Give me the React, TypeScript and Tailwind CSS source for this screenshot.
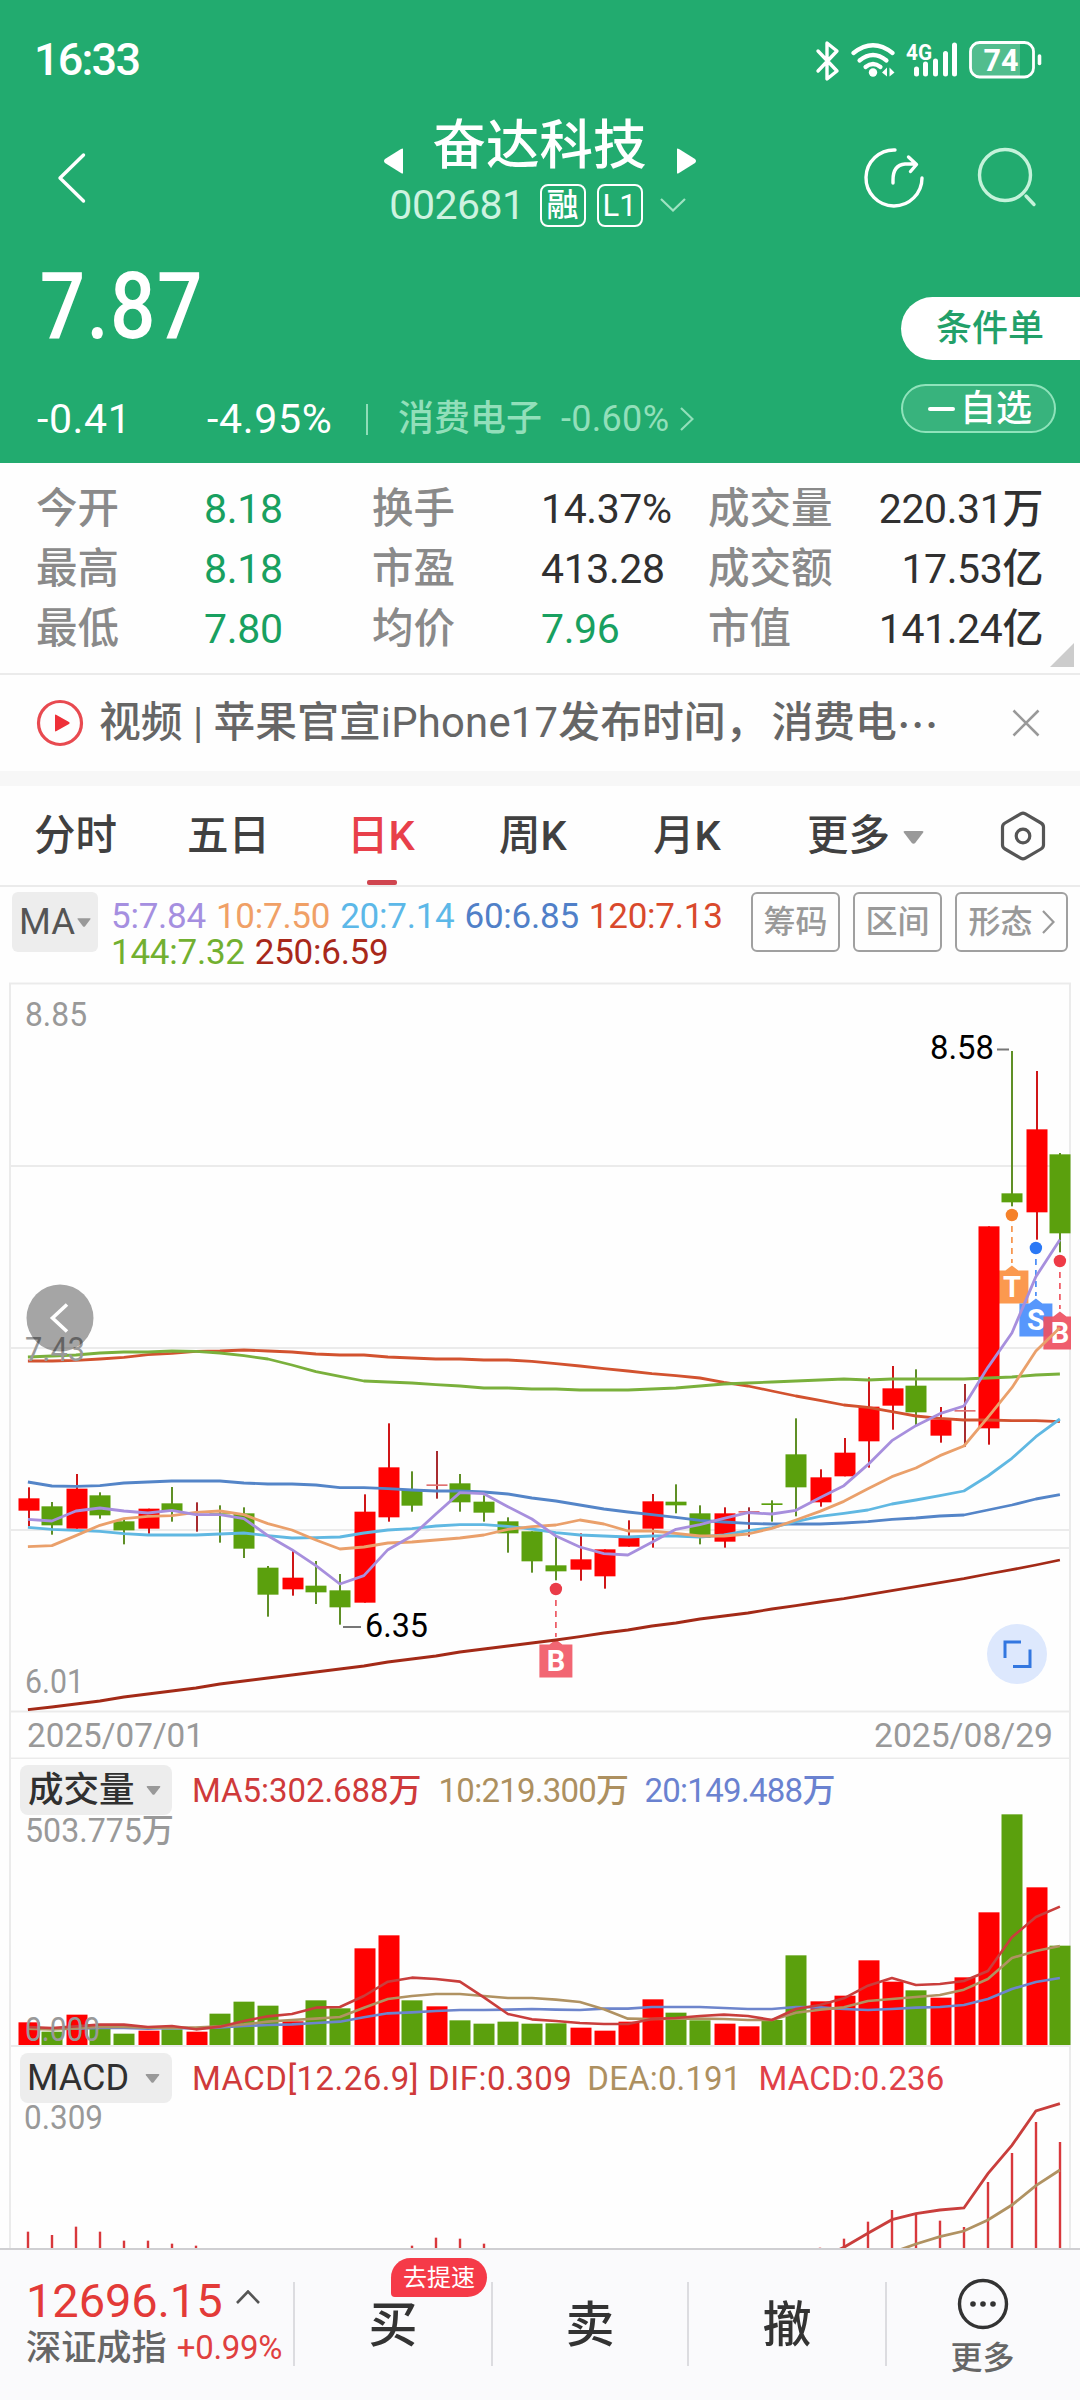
import React from "react";

const FONT = "font-[Roboto,'Noto_Sans_CJK_SC',sans-serif]";

const RED = "#ff0000";
const GREEN = "#5ba00d";
const xAt = (i: number) => 27.9 + i * 24;
// Rising candles sit one pixel to the right of falling ones
const barX = (i: number) => (candles[i][0] === "g" ? 28 : 29) + i * 24;

// Candle: direction, body top, body bottom, high, low (thirds of a pixel below y=1340)
type Candle = [string, number, number, number, number];
const candles: Candle[] = [
  ["r", 475, 512, 442, 558], ["g", 499, 556, 486, 584], ["r", 446, 566, 402, 566], ["g", 466, 526, 457, 536],
  ["g", 544, 571, 536, 613], ["r", 506, 566, 506, 581], ["g", 490, 515, 441, 545], ["d", 516, 519, 487, 575],
  ["g", 520, 523, 496, 608], ["g", 520, 626, 502, 654], ["g", 683, 764, 678, 830], ["r", 713, 748, 632, 767],
  ["g", 737, 757, 663, 792], ["g", 751, 802, 702, 854], ["r", 515, 788, 463, 788], ["r", 382, 532, 250, 545],
  ["g", 447, 497, 394, 515], ["d", 433, 438, 333, 476], ["g", 430, 487, 402, 515], ["g", 485, 518, 466, 545],
  ["g", 544, 580, 532, 638], ["g", 574, 664, 574, 698], ["g", 676, 694, 590, 721], ["r", 658, 689, 580, 722],
  ["r", 628, 709, 628, 746], ["r", 593, 620, 541, 620], ["r", 484, 566, 462, 623], ["g", 485, 496, 433, 520],
  ["g", 520, 594, 496, 613], ["r", 520, 605, 502, 623], ["d", 513, 518, 502, 590], ["g", 490, 495, 481, 545],
  ["g", 343, 442, 235, 529], ["r", 412, 487, 388, 500], ["r", 338, 409, 294, 409], ["r", 200, 304, 112, 383],
  ["r", 145, 197, 78, 269], ["g", 137, 217, 88, 256], ["r", 238, 287, 201, 308], ["d", 210, 215, 132, 320],
  ["r", -341, 265, -341, 314], ["g", -440, -413, -867, -401], ["r", -632, -383, -807, -301], ["g", -557, -320, -561, -263],
];

const averages: { color: string; v: number[] }[] = [
  { color: "#a32a17", v: [1109, 1101, 1092, 1083, 1071, 1062, 1053, 1044, 1032, 1023, 1014, 1005, 996, 987, 978, 966, 957, 948, 936, 927, 918, 909, 900, 890, 879, 870, 858, 849, 837, 828, 819, 807, 797, 786, 776, 764, 752, 740, 728, 716, 702, 689, 675, 660] },
  { color: "#d2522f", v: [63, 63, 61, 57, 52, 44, 40, 34, 33, 30, 33, 36, 42, 45, 45, 51, 54, 57, 57, 60, 60, 64, 71, 78, 86, 93, 101, 107, 114, 127, 138, 153, 168, 181, 195, 202, 215, 228, 235, 240, 240, 242, 242, 245] },
  { color: "#7ab03c", v: [51, 48, 45, 39, 36, 36, 33, 34, 39, 47, 57, 75, 95, 109, 123, 126, 129, 134, 138, 144, 144, 147, 147, 150, 150, 150, 147, 144, 138, 132, 129, 126, 123, 120, 117, 120, 117, 117, 117, 117, 114, 111, 105, 102] },
  { color: "#5485c8", v: [426, 438, 439, 437, 429, 426, 423, 423, 423, 429, 432, 432, 435, 443, 443, 446, 450, 453, 453, 456, 462, 474, 483, 495, 507, 516, 524, 532, 541, 546, 550, 552, 552, 552, 549, 545, 538, 534, 528, 525, 510, 495, 477, 464] },
  { color: "#60b8e2", v: [562, 568, 571, 574, 581, 585, 585, 585, 582, 579, 587, 594, 593, 591, 579, 570, 566, 558, 554, 554, 559, 567, 578, 585, 588, 591, 588, 588, 591, 585, 572, 563, 545, 529, 520, 510, 492, 480, 467, 453, 408, 355, 290, 237] },
  { color: "#eaa06b", v: [620, 617, 587, 556, 536, 529, 527, 517, 513, 524, 551, 570, 600, 627, 621, 609, 606, 600, 594, 585, 568, 560, 555, 540, 552, 573, 573, 580, 588, 588, 582, 565, 540, 514, 484, 446, 410, 384, 347, 318, 232, 143, 33, -37] },
  { color: "#a78fdd", v: [538, 543, 513, 504, 513, 519, 511, 524, 524, 536, 587, 629, 677, 732, 707, 629, 588, 522, 458, 461, 500, 537, 588, 621, 641, 645, 607, 568, 554, 535, 518, 522, 511, 473, 437, 374, 302, 257, 221, 198, 82, -21, -190, -301] },
];

// Volume bar tops and averages (thirds of a pixel below y=1750)
const volume = [817, 845, 794, 836, 851, 842, 838, 845, 791, 755, 767, 814, 751, 775, 595, 556, 751, 769, 811, 821, 815, 821, 820, 833, 842, 815, 748, 788, 811, 821, 829, 810, 616, 754, 737, 631, 695, 721, 743, 682, 487, 193, 412, 587];
const volumeAverages: { color: string; v: number[] }[] = [
  { color: "#6d85cc", v: [835, 836, 836, 834, 834, 836, 834, 835, 832, 828, 825, 823, 819, 815, 802, 790, 787, 783, 780, 780, 779, 777, 779, 780, 776, 776, 771, 771, 771, 774, 777, 777, 771, 772, 777, 780, 777, 773, 771, 765, 747, 717, 696, 684] },
  { color: "#b09262", v: [836, 838, 835, 830, 831, 833, 833, 833, 829, 823, 815, 810, 806, 801, 773, 747, 738, 732, 732, 738, 744, 744, 749, 756, 778, 806, 807, 806, 806, 807, 810, 810, 788, 779, 772, 753, 747, 741, 735, 719, 687, 624, 603, 588] },
  { color: "#c93e3c", v: [831, 834, 829, 824, 824, 831, 828, 838, 830, 813, 799, 792, 773, 771, 738, 695, 683, 687, 695, 742, 792, 808, 813, 819, 822, 822, 807, 804, 798, 794, 798, 810, 777, 765, 745, 707, 684, 705, 702, 693, 663, 562, 501, 470] },
];

// MACD bars and lines: index, value (thirds of a pixel below y=2040)
const macdBars: [number, number][] = [[0, 575], [1, 585], [2, 560], [3, 575], [4, 602], [5, 602], [6, 611], [7, 617], [16, 617], [17, 593], [18, 596], [19, 611], [33, 623], [34, 596], [35, 545], [36, 510], [37, 520], [38, 542], [39, 561], [40, 426], [41, 339], [42, 246], [43, 306]];
const dif: [number, number][] = [[33, 655], [34, 622], [35, 580], [36, 539], [37, 521], [38, 510], [39, 504], [40, 401], [41, 316], [42, 213], [43, 191]];
const dea: [number, number][] = [[36, 638], [37, 612], [38, 590], [39, 573], [40, 540], [41, 495], [42, 437], [43, 390]];

const toPoints = (v: [number, number][], base: number) => v.map(([i, y]) => `${xAt(i)},${base + y / 3}`).join(" ");
const series = (v: number[], base: number) => toPoints(v.map((y, i) => [i, y] as [number, number]), base);

function Caret({ className }: { className: string }) {
  return (
    <svg viewBox="0 0 16 10" className={className} fill="#999">
      <path d="M1.5 0h13q1.800 0 .8 1.400L9.300 9.200q-1.300 1.200-2.600 0L.7 1.400Q-.3 0 1.500 0Z" />
    </svg>
  );
}

function Label({ x, y, w, size = 33, fill = "#999", children }: { x: number; y: number; w: number; size?: number; fill?: string; children: string }) {
  return (
    <text x={x} y={y} fontSize={size} fill={fill} fontWeight={450} textLength={w} lengthAdjust="spacingAndGlyphs">
      {children}
    </text>
  );
}

function Marker({ i, y, letter, dot, tag }: { i: number; y: number; letter: string; dot: string; tag: string }) {
  const x = xAt(i);
  return (
    <g>
      <circle cx={x} cy={y} r={6.2} fill={dot} />
      <path d={`M${x} ${y + 11}v37`} stroke={dot} strokeWidth={1.7} strokeDasharray="6 5" opacity={0.85} />
      <path d={`M${x - 16.5} ${y + 55.5}h10l6.5 -5l6.5 5h10v33h-33z`} fill={tag} fillOpacity={0.93} />
      <text x={x} y={y + 82} fontSize={29} fontWeight={700} fill="#fff" textAnchor="middle">
        {letter}
      </text>
    </g>
  );
}

function StatusBar() {
  return (
    <div className="flex h-[116px] items-center justify-between pl-[34px] pr-[36px] pt-[3px]">
      <span className="text-[45px] font-medium leading-[45px] tracking-[-1.8px]">16:33</span>
      <svg viewBox="814 36 230 44" className="h-[44px] w-[230px]" fill="none" stroke="#fff">
        <path d="M818 49l19 20-10 8V41l10 8-19 20" strokeWidth="3.400" strokeLinejoin="round" strokeLinecap="round" />
        <g strokeWidth="4.200" strokeLinecap="round">
          <path d="M853.500 51q19.500-15.500 39 0" />
          <path d="M859.500 58.500q13.500-11 27 0" />
          <path d="M865.500 65q7.500-6 15 0" />
        </g>
        <circle cx="873" cy="70.500" r="4.200" fill="#fff" stroke="none" />
        <path d="M887 65.500v9l-5-4zM889.500 65.500v9l5-4z" fill="#fff" stroke="none" />
        <text x="906" y="57.500" fontSize="22" fontWeight="700" fill="#fff" stroke="none" textLength="26" lengthAdjust="spacingAndGlyphs">4G</text>
        <path d="M916.500 67v5M925.500 62v10M935.500 59v13M945.500 51.500v20.500M954.500 43v29" strokeWidth="5" strokeLinecap="round" />
        <path d="M978 41h42v34h-42q-8 0-8-8V49q0-8 8-8z" fill="#fff" fillOpacity=".22" stroke="none" />
        <rect x="970.500" y="40.500" width="63" height="34.500" rx="9" strokeWidth="2.800" />
        <path d="M1039.500 54v7.500" strokeWidth="3.600" strokeLinecap="round" />
        <text x="983.500" y="69" fontSize="32" fontWeight="700" fill="#fff" stroke="none" textLength="35" lengthAdjust="spacingAndGlyphs">74</text>
      </svg>
    </div>
  );
}

function Header() {
  return (
    <header className="h-[463px] bg-[#22ab6f] text-white">
      <StatusBar />
      <div className="flex h-[124px] justify-between pl-[56px] pr-[42px]">
        <svg viewBox="56 150 32 56" className="mt-[34px] h-[56px] w-[32px]" fill="none" stroke="#fff" strokeWidth="3.400" strokeLinecap="round" strokeLinejoin="round">
          <path d="M83.500 155L60 178l23.500 23" />
        </svg>
        <div className="ml-[131px] flex w-[320px] flex-col items-center">
          <div className="flex h-[60px] items-center gap-[30px]">
            <svg viewBox="0 0 19 26" className="mt-[29px] h-[26px] w-[19px]" fill="#fff"><path d="M19 1v24q0 1-2 0L1 15q-2-2 0-4L17 1q2-1 2 0z" /></svg>
            <h1 className="text-[53.5px] font-medium leading-[60px]">奋达科技</h1>
            <svg viewBox="0 0 19 26" className="mt-[29px] h-[26px] w-[19px]" fill="#fff"><path d="M0 1v24q0 1 2 0L18 15q2-2 0-4L2 1Q0 0 0 1z" /></svg>
          </div>
          <div className="mt-[8px] flex h-[42px] items-center pr-[4px]">
            <span className="text-[41px] leading-[42px] tracking-[-0.5px] text-[#cdf3e0]">002681</span>
            <span className="ml-[15px] flex h-[43px] w-[46px] items-center justify-center rounded-[8px] border-2 border-white text-[32px] font-medium leading-none">融</span>
            <span className="ml-[11px] flex h-[43px] w-[46px] items-center justify-center rounded-[8px] border-2 border-white text-[31px] font-[450] leading-none">L1</span>
            <svg viewBox="0 0 26 14" className="ml-[17px] h-[14px] w-[26px]" fill="none" stroke="#9fe3c2" strokeWidth="2.200"><path d="M1 1l12 11.500L25 1" /></svg>
          </div>
        </div>
        <svg viewBox="860 144 178 68" className="mt-[28px] h-[68px] w-[178px]" fill="none" stroke="#fff" strokeWidth="3.400" strokeLinecap="round">
          <path d="M895 150A28 28 0 1 0 922 178" />
          <path d="M893 183v-3q0-15 12-16h11M908.500 157l8 7.500-6 7" strokeLinejoin="round" />
          <g stroke="#c4f2da">
            <circle cx="1005" cy="175" r="25.500" />
            <path d="M1026 196l8 8.500" />
          </g>
        </svg>
      </div>
      <div className="flex h-[223px] justify-between">
        <div className="pl-[38px]">
          <div className="mt-[21px] flex h-[92px] items-center">
            <span className="origin-left scale-x-[0.87] pl-[2px] text-[92px] font-medium leading-[92px] tracking-[1.5px]">7.87</span>
          </div>
          <div className="mt-[41px] flex h-[50px] items-center leading-[50px]">
            <span className="ml-[-1px] w-[170px] text-[41px] font-[450] tracking-[0.6px]">-0.41</span>
            <span className="w-[159px] text-[41px] font-[450] tracking-[0.7px]">-4.95%</span>
            <span className="h-[31px] w-[2px] bg-[#8fddb8]" />
            <span className="ml-[30px] text-[36px] font-medium text-[#92dfba]">消费电子</span>
            <span className="ml-[19px] text-[36px] tracking-[0.3px] text-[#92dfba]">-0.60%</span>
            <svg viewBox="0 0 14 24" className="ml-[11px] h-[24px] w-[14px]" fill="none" stroke="#92dfba" strokeWidth="2.200"><path d="M1 1l11.500 11L1 23" /></svg>
          </div>
        </div>
        <div className="flex w-[179px] flex-col">
          <button className="mt-[57px] flex h-[63px] items-center rounded-l-full bg-white pl-[35px] text-[36px] font-medium leading-none text-[#22a069]">条件单</button>
          <button className="mt-[24px] flex h-[49px] w-[155px] items-center rounded-full border-2 border-[#8fe3bb] bg-white/10 pl-[25px] text-[36px] font-medium leading-none">
            <span className="mr-[5px] h-[4px] w-[27px] rounded-full bg-white" />自选
          </button>
        </div>
      </div>
    </header>
  );
}

const stats = [
  ["今开", "8.18", "换手", "14.37%", "成交量", "220.31万"],
  ["最高", "8.18", "市盈", "413.28", "成交额", "17.53亿"],
  ["最低", "7.80", "均价", "7.96", "市值", "141.24亿"],
];

function Stats() {
  return (
    <section className="relative flex h-[212px] flex-col border-b-2 border-[#ebebeb] pl-[36px] pr-[37px] pt-[16px]">
      {stats.map((row, i) => (
        <div key={row[0]} className="flex h-[60px] items-center text-[41px] font-[450] leading-[60px]">
          <span className="w-[168px] text-[41.5px] text-[#8a8a8a]">{row[0]}</span>
          <span className="w-[168px] tracking-[-0.3px] text-[#18a060]">{row[1]}</span>
          <span className="w-[169px] text-[41.5px] text-[#8a8a8a]">{row[2]}</span>
          <span className={i === 2 ? "w-[167px] tracking-[-0.4px] text-[#18a060]" : "w-[167px] tracking-[-0.4px] text-[#303030]"}>{row[3]}</span>
          <span className="text-[41.5px] text-[#8a8a8a]">{row[4]}</span>
          <span className="ml-auto tracking-[-0.4px] text-[#303030]">{row[5]}</span>
        </div>
      ))}
      <svg viewBox="0 0 24 24" className="absolute bottom-[6px] right-[6px] size-[24px]" fill="#ccc"><path d="M24 0v24H0z" /></svg>
    </section>
  );
}

function News() {
  return (
    <section className="flex h-[96px] items-center pl-[36px]">
      <svg viewBox="0 0 48 48" className="size-[48px]"><circle cx="24" cy="24" r="21.500" fill="none" stroke="#e84a50" strokeWidth="3.200" /><path d="M19 16.500v15q0 1.500 1.500.6L33 25q1.500-1 0-2L20.500 15.900Q19 15 19 16.500z" fill="#ee3038" /></svg>
      <p className="ml-[15px] flex text-[41.8px] font-[450] leading-[60px] text-[#666]">
        <span className="whitespace-pre">视频 | 苹果官宣<span className="tracking-[0.25px]">iPhone17</span>发布时间<span className="tracking-[4px]">，</span>消费电</span>
        <span className="font-['Noto_Sans_CJK_SC',sans-serif]">⋯</span>
      </p>
      <svg viewBox="0 0 28 28" className="ml-auto mr-[40px] size-[28px]" stroke="#999" strokeWidth="2.600"><path d="M1.500 1.500l25 25M26.500 1.500l-25 25" /></svg>
    </section>
  );
}

function Tabs() {
  return (
    <nav className="flex h-[101px] items-center border-b-2 border-[#ebebeb] pl-[34px] text-[41.5px] font-medium leading-[60px] text-[#404040]">
      <span className="w-[153px]">分时</span>
      <span className="w-[160px]">五日</span>
      <span className="relative flex w-[152px] text-[#e8404a]">
        日K
        <i className="absolute left-[20px] top-[74px] h-[5px] w-[30px] rounded-[2px] bg-[#d0454f]" />
      </span>
      <span className="w-[154px]">周K</span>
      <span className="w-[154px]">月K</span>
      <span>更多</span>
      <Caret className="ml-[12px] mt-[3px] h-[13px] w-[23px]" />
      <svg viewBox="0 0 46 50" className="ml-auto mr-[34px] h-[50px] w-[46px]" fill="none" stroke="#555" strokeWidth="3.200" strokeLinejoin="round">
        <path d="M21 2.700q2-1 4 0l16 9.300q2.500 1.500 2.500 4v18q0 2.500-2.500 4l-16 9.300q-2 1-4 0L5 38q-2.500-1.500-2.500-4V16q0-2.500 2.500-4z" />
        <circle cx="23" cy="25" r="6.800" />
      </svg>
    </nav>
  );
}

function MaBar() {
  return (
    <div className="flex h-[95px] items-start pl-[12px] pr-[12px] pt-[5px]">
      <div className="flex h-[60px] w-[86px] items-center justify-center rounded-[6px] bg-[#ededed] text-[36.5px] font-[450] leading-none text-[#555]">
        MA
        <Caret className="ml-[2px] mt-px h-[9px] w-[14px]" />
      </div>
      <div className="ml-[13px] flex w-[640px] flex-wrap gap-x-[10px] pt-[7px] text-[35px] font-[450] leading-[36px] tracking-[-0.25px]">
        <span className="text-[#a58fe0]">5:7.84</span>
        <span className="text-[#f0a066]">10:7.50</span>
        <span className="text-[#5cb8e8]">20:7.14</span>
        <span className="text-[#5080c8]">60:6.85</span>
        <span className="text-[#d9492c]">120:7.13</span>
        <span className="text-[#72b030]">144:7.32</span>
        <span className="text-[#a8281a]">250:6.59</span>
      </div>
      <div className="flex gap-[13px] text-[32px] font-[450] leading-none text-[#999]">
        <button className="flex h-[60px] w-[89px] items-center justify-center rounded-[6px] border-2 border-[#a0a0a0]">筹码</button>
        <button className="flex h-[60px] w-[89px] items-center justify-center rounded-[6px] border-2 border-[#a0a0a0]">区间</button>
        <button className="flex h-[60px] w-[113px] items-center justify-center gap-[9px] rounded-[6px] border-2 border-[#a0a0a0]">
          形态
          <svg viewBox="0 0 13 24" className="h-[24px] w-[13px]" fill="none" stroke="#999" strokeWidth="2.200"><path d="M1 1l10.500 11L1 23" /></svg>
        </button>
      </div>
    </div>
  );
}

function PriceChart() {
  return (
    <svg viewBox="0 982 1080 777" className="block h-[777px] w-[1080px]">
      <g stroke="#ebebeb" strokeWidth="2">
        <path d="M9 983.500H1071M10 1166H1070M10 1348H1070M10 1530H1070M654 1548H1070M10 1711.500H1070M9 1758.500H1071M10 983v777M1070 983v777" fill="none" />
      </g>
      <clipPath id="plot"><rect x="10" y="984" width="1061" height="727" /></clipPath>
      <g clipPath="url(#plot)">
        <Marker i={22} y={1589} letter="B" dot="#ea3c48" tag="#f15a68" />
        <Marker i={41} y={1215} letter="T" dot="#f5812a" tag="#fb9142" />
        <Marker i={42} y={1248} letter="S" dot="#2a78f5" tag="#4a8ffc" />
        <Marker i={43} y={1261} letter="B" dot="#ee3a46" tag="#ee5262" />
        {candles.map(([c, top, bottom, high, low], i) => {
          const x = barX(i);
          const y = (v: number) => 1340 + v / 3;
          const body = c === "g" ? GREEN : c === "r" ? RED : "#e07070";
          const wick = c === "g" ? "#5f8f26" : c === "r" ? "#cf1618" : "#a82c30";
          return (
            <g key={i}>
              <rect x={x - 1} y={y(high)} width={2} height={(low - high) / 3} fill={wick} />
              <rect x={x - 10.5} y={y(top)} width={21} height={(bottom - top) / 3} fill={body} />
            </g>
          );
        })}
        {averages.map((a) => (
          <polyline key={a.color} points={series(a.v, 1340)} fill="none" stroke={a.color} strokeWidth="2.800" strokeLinejoin="round" />
        ))}
      </g>
      <Label x={25} y={1026} w={62}>8.85</Label>
      <Label x={25} y={1361} w={60}>7.43</Label>
      <Label x={25} y={1692.5} w={59}>6.01</Label>
      <Label x={27} y={1747} w={177}>2025/07/01</Label>
      <Label x={874} y={1747} w={179}>2025/08/29</Label>
      <Label x={930} y={1058.5} w={64} fill="#000">8.58</Label>
      <Label x={365} y={1636.5} w={63} fill="#000">6.35</Label>
      <path d="M997 1049.500h12M343 1627h18" stroke="#777" strokeWidth="2" />
      <circle cx="60" cy="1318" r="33.500" fill="#000" fillOpacity=".35" />
      <path d="M67 1304.500L52.500 1318l14.500 13.500" fill="none" stroke="#fff" strokeWidth="3.600" />
      <circle cx="1017" cy="1654" r="30" fill="#dde8fd" />
      <path d="M1021 1642h-16v16M1013 1666.500h17v-17" fill="none" stroke="#3377e0" strokeWidth="3" />
    </svg>
  );
}

function VolumePanel() {
  return (
    <section className="relative mx-[9px] h-[288px] border-x-2 border-b-2 border-[#ebebeb]">
      <svg viewBox="11 1759 1060 286" className="absolute left-0 top-0 h-[286px] w-[1060px]">
        {volume.map((v, i) => (
          <rect key={i} x={barX(i) - 10.5} y={1750 + v / 3} width={21} height={2045.3 - 1750 - v / 3} fill={candles[i][0] === "g" ? GREEN : RED} />
        ))}
        {volumeAverages.map((a) => (
          <polyline key={a.color} points={series(a.v, 1750)} fill="none" stroke={a.color} strokeWidth="2.600" strokeLinejoin="round" />
        ))}
        <Label x={25} y={1841.5} w={149}>503.775万</Label>
        <Label x={25} y={2041} w={75}>0.000</Label>
      </svg>
      <div className="relative flex items-center pl-[9px] pt-[5px] text-[33px] font-[450] leading-[50px]">
        <div className="flex h-[50px] w-[152px] items-center rounded-[8px] bg-[#ededed] pl-[8px] text-[35.5px] text-[#303030]">
          成交量
          <Caret className="ml-[11px] h-[9px] w-[15px]" />
        </div>
        <span className="ml-[20px] pt-[2px] tracking-[-0.05px] text-[#cf3a3a]">MA5:302.688万</span>
        <span className="ml-[17px] pt-[2px] tracking-[-0.75px] text-[#ad9060]">10:219.300万</span>
        <span className="ml-[16px] pt-[2px] tracking-[-0.7px] text-[#6a82d0]">20:149.488万</span>
      </div>
    </section>
  );
}

function MacdPanel() {
  return (
    <section className="relative mx-[9px] h-[201px] border-x-2 border-[#ebebeb]">
      <svg viewBox="11 2047 1060 201" className="absolute left-0 top-0 h-[201px] w-[1060px]">
        {macdBars.map(([i, v]) => (
          <rect key={i} x={xAt(i) - 1.1} y={2040 + v / 3} width={2.4} height={300} fill="#d8383c" />
        ))}
        <polyline points={toPoints(dea, 2040)} fill="none" stroke="#b09262" strokeWidth="2.800" />
        <polyline points={toPoints(dif, 2040)} fill="none" stroke="#c93e3c" strokeWidth="2.800" />
        <Label x={24} y={2129} w={79}>0.309</Label>
      </svg>
      <div className="relative flex items-center pl-[9px] pt-[5px] text-[33px] font-[450] leading-[50px]">
        <div className="flex h-[50px] w-[152px] items-center rounded-[8px] bg-[#ededed] pl-[7px] text-[36px] text-[#303030]">
          MACD
          <Caret className="ml-auto mr-[12px] h-[9px] w-[15px]" />
        </div>
        <span className="ml-[20px] pt-[2px] tracking-[0.45px] text-[#cf3a3a]">MACD[12.26.9]</span>
        <span className="ml-[9px] pt-[2px] tracking-[0.5px] text-[#cf3a3a]">DIF:0.309</span>
        <span className="ml-[15px] pt-[2px] tracking-[0.15px] text-[#ad9060]">DEA:0.191</span>
        <span className="ml-[17px] pt-[2px] tracking-[0.15px] text-[#e04048]">MACD:0.236</span>
      </div>
    </section>
  );
}

function BottomBar() {
  return (
    <footer className="flex h-[152px] border-t-2 border-[#cfcfd2] bg-[#fafafc]">
      <div className="w-[293px] pl-[26px] pt-[26px]">
        <div className="flex h-[50px] items-center text-[47px] font-[450] leading-[50px] text-[#e33a38]">
          <span className="tracking-[-0.1px]">12696.15</span>
          <svg viewBox="0 0 24 14" className="mb-[8px] ml-[13px] h-[14px] w-[24px]" fill="none" stroke="#555" strokeWidth="2.600"><path d="M1 13L12 1.500 23 13" /></svg>
        </div>
        <div className="mt-[2px] flex h-[40px] items-center whitespace-nowrap leading-[40px]">
          <span className="text-[35.2px] font-[450] text-[#666]">深证成指</span>
          <span className="ml-[10px] text-[33px] font-[450] tracking-[-0.3px] text-[#e0403f]">+0.99%</span>
        </div>
      </div>
      <div className="relative mt-[32px] flex h-[84px] w-[198px] items-center justify-center border-l-2 border-[#dcdce0] text-[49px] font-medium leading-none text-[#333]">
        <span className="mt-[3px]">买</span>
        <span className="absolute left-[96px] top-[-24px] flex h-[39px] w-[96px] items-center justify-center rounded-[20px] rounded-bl-[4px] bg-[#f53a48] text-[24px] font-normal leading-none text-white">去提速</span>
      </div>
      <div className="mt-[32px] flex h-[84px] w-[196px] items-center justify-center border-l-2 border-[#dcdce0] text-[49px] font-medium leading-none text-[#333]"><span className="mt-[3px]">卖</span></div>
      <div className="mt-[32px] flex h-[84px] w-[198px] items-center justify-center border-l-2 border-[#dcdce0] text-[49px] font-medium leading-none text-[#333]"><span className="mt-[3px]">撤</span></div>
      <div className="mt-[32px] flex h-[84px] flex-1 flex-col items-center border-l-2 border-[#dcdce0] pr-[2px]">
        <svg viewBox="0 0 52 52" className="mt-[-4px] size-[52px] shrink-0" fill="#333">
          <circle cx="26" cy="26" r="23.500" fill="none" stroke="#333" strokeWidth="3.400" />
          <circle cx="16" cy="26" r="2.800" /><circle cx="26" cy="26" r="2.800" /><circle cx="36" cy="26" r="2.800" />
        </svg>
        <span className="mt-[12px] text-[32px] font-[450] leading-[32px] text-[#666]">更多</span>
      </div>
    </footer>
  );
}

export default function App() {
  return (
    <main className={`${FONT} h-[2400px] w-[1080px] overflow-hidden bg-[#fefefe]`}>
      <Header />
      <Stats />
      <News />
      <div className="h-[15px] bg-[#f7f7f7]" />
      <Tabs />
      <MaBar />
      <PriceChart />
      <VolumePanel />
      <MacdPanel />
      <BottomBar />
    </main>
  );
}
